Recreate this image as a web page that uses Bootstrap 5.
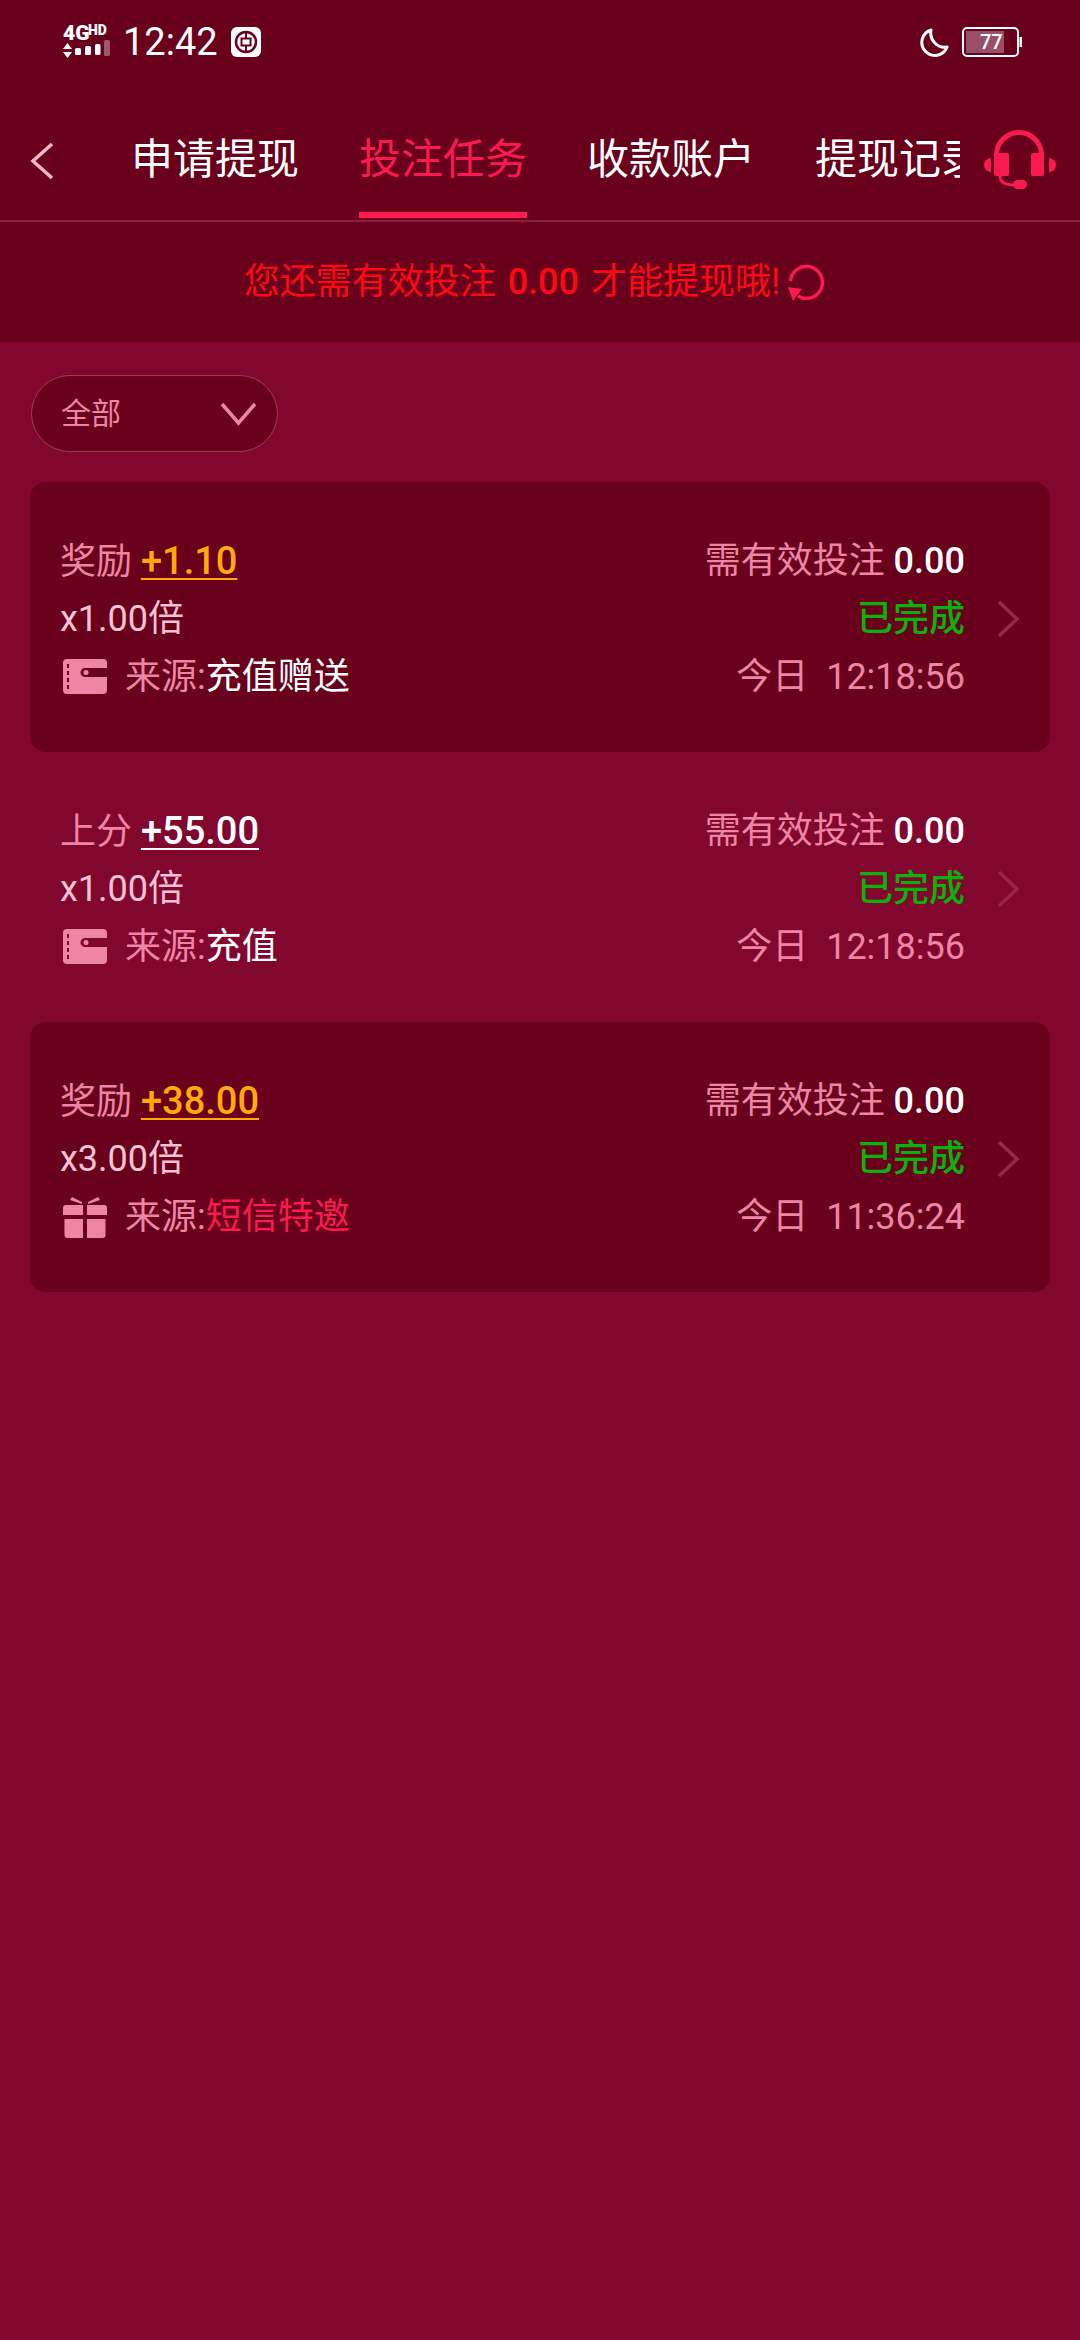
<!DOCTYPE html>
<html lang="zh">
<head>
  <meta charset="UTF-8">
  <meta name="viewport" content="width=device-width, initial-scale=1.0">
  <title>投注任务</title>
  <link href="https://cdn.jsdelivr.net/npm/bootstrap@5.3.0/dist/css/bootstrap.min.css" rel="stylesheet">
  <style>
    body {
      background: #81072f;
      font-family: Roboto, "Noto Sans CJK SC", sans-serif;
      color: #ee85a5;
      min-height: 100vh;
    }
    .top-head { background: #69001c; height: 222px; border-bottom: 2px solid #8f1c3d; }
    .status-bar { height: 84px; padding: 0 58px 0 63px; color: #fff; }
    .clock { font-size: 38px; line-height: 1; margin: 0 13px; }
    .tab-row { height: 136px; }
    .back-slot { width: 100px; padding: 58px 0 0 30px; flex: none; }
    .tab-clip { width: 860px; height: 136px; padding-left: 31px; overflow: hidden; flex: none; }
    .tab-item { font-size: 42px; line-height: 42px; color: #fff; margin-right: 60px; flex: none; height: 136px; padding-top: 55px; position: relative; }
    .tab-item.on { color: #fb1a4f; }
    .tab-item.on::after { content: ""; position: absolute; left: 0; right: 0; bottom: 2px; height: 6px; background: #fb1a4f; }
    .help-slot { padding: 46px 0 0 24px; }
    .notice { background: #69001c; height: 120px; padding-right: 10px; color: #fb0a14; font-size: 36px; line-height: 1; word-spacing: 3px; }
    .notice b { font-weight: 500; }
    .filter-pill { width: 247px; height: 77px; margin: 33px 0 30px 31px; padding: 0 20px 0 29px; background: #69001c; border: 1px solid #a33a59; border-radius: 39px; font-size: 30px; color: #ee85a5; }
    .task-list { padding: 0 30px; }
    .task-row { height: 270px; border-radius: 16px; padding: 3px 30px 0; }
    .task-row.dark { background: #69001c; }
    .task-body { width: 905px; flex: none; }
    .line { height: 58px; font-size: 36px; line-height: 1; }
    .amount { font-size: 38px; font-weight: 500; text-decoration: underline; text-underline-offset: 4px; text-decoration-thickness: 2px; color: #fff; }
    .amount.gold { color: #ffa90a; }
    .need b { color: #fff; font-weight: 500; }
    .multi { color: #fbc3d4; }
    .done { color: #0bb20b; font-weight: 500; }
    .src-val { color: #fff; }
    .src-val.hot { color: #fb1a4f; }
    .src-ico { width: 44px; margin: 0 18px 0 3px; flex: none; }
    .go-arrow { margin-left: 32px; flex: none; }
  </style>
</head>
<body>

  <div class="top-head">
    <div class="status-bar d-flex align-items-center">
      <svg width="47" height="46" viewBox="0 -6 47 46">
        <text x="0" y="15" font-family="Roboto" font-weight="900" font-size="21" fill="#fff">4G</text>
        <text x="25" y="10" font-family="Roboto" font-weight="900" font-size="14" fill="#fff">HD</text>
        <path d="M0 24 4.500 18 9 24zM0 27 4.500 33 9 27z" fill="#fff"/>
        <rect x="12" y="23" width="6" height="7" rx="1.500" fill="#fff"/>
        <rect x="22" y="21" width="6" height="9" rx="1.500" fill="#fff"/>
        <rect x="32" y="19" width="5.500" height="11" rx="1.500" fill="#fff"/>
        <rect x="41" y="15" width="6" height="16" rx="1.500" fill="#fff" opacity=".35"/>
      </svg>
      <span class="clock">12:42</span>
      <svg width="30" height="30" viewBox="0 0 30 30">
        <rect width="30" height="30" rx="6" fill="#fff"/>
        <circle cx="15" cy="15" r="10" fill="none" stroke="#69001c" stroke-width="2.500"/>
        <rect x="10.500" y="11.500" width="9" height="7" fill="none" stroke="#69001c" stroke-width="2"/>
        <path d="M15 5v6M15 19v6" stroke="#69001c" stroke-width="2"/>
      </svg>
      <div class="ms-auto d-flex align-items-center gap-2">
        <svg width="30" height="30" viewBox="0 0 30 30" class="me-1">
          <path d="M11 3A13 13 0 1 0 27 20C18 22 9 13 11 3Z" fill="none" stroke="#fff" stroke-width="3" stroke-linejoin="round"/>
        </svg>
        <svg width="60" height="30" viewBox="0 0 60 30">
          <rect x="1" y="1" width="55" height="28" rx="4" fill="none" stroke="#fff" stroke-width="2"/>
          <rect x="4" y="4" width="38" height="22" fill="#9a4f69"/>
          <text x="18" y="22" font-family="Roboto" font-weight="500" font-size="20" fill="#fff">77</text>
          <rect x="57.500" y="10" width="2.500" height="10" fill="#fff"/>
        </svg>
      </div>
    </div>
    <div class="tab-row d-flex">
      <div class="back-slot">
        <svg width="24" height="38" viewBox="0 0 24 38" class="d-block">
          <path d="M22 2 3 19l19 17" fill="none" stroke="#f8b4c8" stroke-width="3.500"/>
        </svg>
      </div>
      <div class="tab-clip d-flex">
        <div class="tab-item">申请提现</div>
        <div class="tab-item on">投注任务</div>
        <div class="tab-item">收款账户</div>
        <div class="tab-item">提现记录</div>
      </div>
      <div class="help-slot">
        <svg width="72" height="60" viewBox="0 0 72 60" class="d-block">
          <path d="M12.500 30V25a22.500 22.500 0 0 1 45 0v5" fill="none" stroke="#fb1a4f" stroke-width="5"/>
          <rect x="10" y="23" width="15" height="23" rx="2" fill="#fb1a4f"/>
          <rect x="47" y="23" width="13" height="23" rx="2" fill="#fb1a4f"/>
          <path d="M7 28a7 7 0 0 0 0 14zM65 28a7 7 0 0 1 0 14z" fill="#fb1a4f"/>
          <path d="M16 46c0 6 5 9 14 9" fill="none" stroke="#fb1a4f" stroke-width="3"/>
          <rect x="29" y="50" width="14" height="9" rx="4.500" fill="#fb1a4f"/>
        </svg>
      </div>
    </div>
  </div>

  <div class="notice d-flex align-items-center justify-content-center">
    <span>您还需有效投注 <b>0.00</b> 才能提现哦!</span>
    <svg width="38" height="38" viewBox="0 0 38 38" class="ms-2">
      <path d="M2.500 18A16 16 0 1 1 10 33" fill="none" stroke="#fb1a4f" stroke-width="3.500"/>
      <path d="M0 24 14 26 5 38z" fill="#fb1a4f"/>
    </svg>
  </div>

  <div class="filter-pill d-flex align-items-center justify-content-between">
    <span>全部</span>
    <svg width="37" height="24" viewBox="0 0 37 24">
      <path d="M2 2 18.500 21 35 2" fill="none" stroke="#ee85a5" stroke-width="3.500"/>
    </svg>
  </div>

  <div class="task-list">
    <div class="task-row dark d-flex align-items-center">
      <div class="task-body">
        <div class="line d-flex justify-content-between align-items-center">
          <span>奖励 <span class="amount gold">+1.10</span></span>
          <span class="need">需有效投注 <b>0.00</b></span>
        </div>
        <div class="line d-flex justify-content-between align-items-center">
          <span class="multi">x1.00倍</span>
          <span class="done">已完成</span>
        </div>
        <div class="line d-flex justify-content-between align-items-center">
          <span class="d-flex align-items-center">
            <svg class="src-ico" width="44" height="35" viewBox="0 0 44 35"><path d="M4 0h36a4 4 0 0 1 4 4v5H22a4.500 4.500 0 0 0 0 9h22v13a4 4 0 0 1-4 4H4a4 4 0 0 1-4-4V4a4 4 0 0 1 4-4Z" fill="#ee85a5"/><circle cx="23" cy="13.500" r="2.500" fill="#ee85a5"/><path d="M5 5v26" stroke="#69001c" stroke-width="2" stroke-dasharray="4 3"/></svg>
            来源:<span class="src-val">充值赠送</span>
          </span>
          <span>今日&nbsp; 12:18:56</span>
        </div>
      </div>
      <svg class="go-arrow" width="22" height="38" viewBox="0 0 22 38"><path d="M2 2 20 19 2 36" fill="none" stroke="#98274a" stroke-width="3.500"/></svg>
    </div>

    <div class="task-row d-flex align-items-center">
      <div class="task-body">
        <div class="line d-flex justify-content-between align-items-center">
          <span>上分 <span class="amount">+55.00</span></span>
          <span class="need">需有效投注 <b>0.00</b></span>
        </div>
        <div class="line d-flex justify-content-between align-items-center">
          <span class="multi">x1.00倍</span>
          <span class="done">已完成</span>
        </div>
        <div class="line d-flex justify-content-between align-items-center">
          <span class="d-flex align-items-center">
            <svg class="src-ico" width="44" height="35" viewBox="0 0 44 35"><path d="M4 0h36a4 4 0 0 1 4 4v5H22a4.500 4.500 0 0 0 0 9h22v13a4 4 0 0 1-4 4H4a4 4 0 0 1-4-4V4a4 4 0 0 1 4-4Z" fill="#ee85a5"/><circle cx="23" cy="13.500" r="2.500" fill="#ee85a5"/><path d="M5 5v26" stroke="#81072f" stroke-width="2" stroke-dasharray="4 3"/></svg>
            来源:<span class="src-val">充值</span>
          </span>
          <span>今日&nbsp; 12:18:56</span>
        </div>
      </div>
      <svg class="go-arrow" width="22" height="38" viewBox="0 0 22 38"><path d="M2 2 20 19 2 36" fill="none" stroke="#98274a" stroke-width="3.500"/></svg>
    </div>

    <div class="task-row dark d-flex align-items-center">
      <div class="task-body">
        <div class="line d-flex justify-content-between align-items-center">
          <span>奖励 <span class="amount gold">+38.00</span></span>
          <span class="need">需有效投注 <b>0.00</b></span>
        </div>
        <div class="line d-flex justify-content-between align-items-center">
          <span class="multi">x3.00倍</span>
          <span class="done">已完成</span>
        </div>
        <div class="line d-flex justify-content-between align-items-center">
          <span class="d-flex align-items-center">
            <svg class="src-ico" width="44" height="42" viewBox="0 0 44 42"><path d="M3 9h17v10H0v-7a3 3 0 0 1 3-3ZM24 9h17a3 3 0 0 1 3 3v7H24ZM1.500 23H20v19H4.500a3 3 0 0 1-3-3ZM24 23h18.500v16a3 3 0 0 1-3 3H24ZM19 8 7 4l2-3 10 5ZM25 8l12-4-2-3-10 5Z" fill="#ee85a5"/></svg>
            来源:<span class="src-val hot">短信特邀</span>
          </span>
          <span>今日&nbsp; 11:36:24</span>
        </div>
      </div>
      <svg class="go-arrow" width="22" height="38" viewBox="0 0 22 38"><path d="M2 2 20 19 2 36" fill="none" stroke="#98274a" stroke-width="3.500"/></svg>
    </div>
  </div>

  <script src="https://cdn.jsdelivr.net/npm/bootstrap@5.3.0/dist/js/bootstrap.bundle.min.js"></script>
</body>
</html>
